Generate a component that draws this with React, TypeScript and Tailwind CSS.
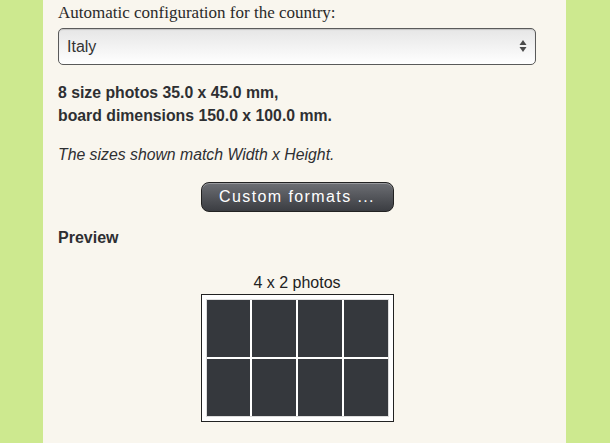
const photos = Array.from({ length: 8 });

export default function App() {
  return (
    <div className="flex h-[443px] w-[610px] overflow-hidden bg-[#cde98f]">
      <div className="ml-[43px] w-[523px] bg-[#f9f6ee] pl-[15px] pr-[30px] pt-[2px] text-[#2e2f32] [font-family:'Liberation_Sans',Arial,sans-serif]">
        <label className="block text-[17px] leading-[22px] text-[#2a2a2a] [font-family:'Liberation_Serif','DejaVu_Serif',serif]">
          Automatic configuration for the country:
        </label>
        <div className="relative mt-[4px] h-[37px] w-[478px] rounded-[5px] border border-[#5a5a5a] bg-gradient-to-b from-[#e6e6e6] to-[#ffffff] shadow-[inset_0_1px_1px_rgba(0,0,0,0.15)]">
          <span className="absolute left-[8px] top-[8px] text-[16px] leading-[20px] text-[#333]">Italy</span>
          <span className="absolute right-[8px] top-[9px] flex">
            <svg width="8" height="16" viewBox="0 0 8 16">
              <path d="M4 2 L7.5 7 L0.5 7 Z" fill="#4a4a4a" />
              <path d="M4 14 L7.5 9 L0.5 9 Z" fill="#4a4a4a" />
            </svg>
          </span>
        </div>
        <p className="mt-[16px] text-[15.8px] font-bold leading-[23px]">
          8 size photos 35.0 x 45.0 mm,
          <br />
          board dimensions 150.0 x 100.0 mm.
        </p>
        <p className="mt-[17px] text-[15.8px] italic leading-[22px]">The sizes shown match Width x Height.</p>
        <div className="mt-[16px] flex justify-center">
          <button className="h-[30px] w-[193px] rounded-[8px] border border-[#222] bg-gradient-to-b from-[#6d6f74] to-[#3b3d42] text-[16px] tracking-[1.4px] text-white shadow-[inset_0_1px_0_rgba(255,255,255,0.3)]">
            Custom formats ...
          </button>
        </div>
        <p className="mt-[15px] text-[16px] font-bold leading-[22px]">Preview</p>
        <div className="mt-[25px] flex flex-col items-center">
          <span className="text-[16px] leading-[18px] text-[#222]">4 x 2 photos</span>
          <div className="mt-[2px] w-[193px] border-[1.5px] border-[#222] bg-white p-[4px]">
            <div className="grid grid-cols-4 gap-[2px] border border-[#ddd] bg-white">
              {photos.map((_, i) => (
                <div key={i} className="h-[57px] bg-[#35383d]" />
              ))}
            </div>
          </div>
        </div>
      </div>
    </div>
  );
}
